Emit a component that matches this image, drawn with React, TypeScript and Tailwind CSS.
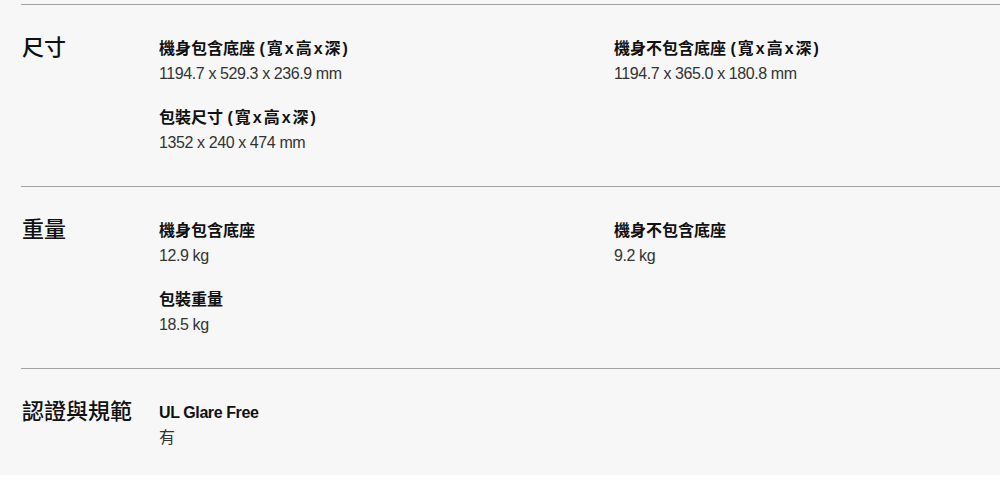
type Spec = {
  label: string
  value: string
}

type Section = {
  title: string
  items: Spec[]
  last?: boolean
}

const sections: Section[] = [
  {
    title: "尺寸",
    items: [
      { label: "機身包含底座 (寬x高x深)", value: "1194.7 x 529.3 x 236.9 mm" },
      { label: "機身不包含底座 (寬x高x深)", value: "1194.7 x 365.0 x 180.8 mm" },
      { label: "包裝尺寸 (寬x高x深)", value: "1352 x 240 x 474 mm" },
    ],
  },
  {
    title: "重量",
    items: [
      { label: "機身包含底座", value: "12.9 kg" },
      { label: "機身不包含底座", value: "9.2 kg" },
      { label: "包裝重量", value: "18.5 kg" },
    ],
  },
  {
    title: "認證與規範",
    items: [{ label: "UL Glare Free", value: "有" }],
    last: true,
  },
]

const SpecItem = ({ spec }: { spec: Spec }) => {
  // the "(寬x高x深)" part sits a little looser in the original font
  const [name, dims] = spec.label.split(" (")
  const latin = /^[\x00-\x7f]+$/.test(name)

  return (
    <div>
      <div
        className={`text-[16px] leading-[24px] font-bold text-[#111] ${latin ? "tracking-[-0.4px]" : "tracking-normal"}`}
      >
        {name}
        {dims && (
          <>
            {" "}
            <span className="tracking-[2px]">({dims}</span>
          </>
        )}
      </div>
      <div className="mt-px text-[16px] leading-[24px] tracking-[-0.4px] text-[#333]">
        {spec.value}
      </div>
    </div>
  )
}

export default function App() {
  return (
    <div
      className="w-full bg-white"
      style={{ fontFamily: '"Liberation Sans", "Noto Sans CJK TC", sans-serif' }}
    >
      <div className="bg-[#f7f7f7] pt-[4px]">
        {sections.map((section) => (
          <div
            key={section.title}
            className={`ml-[21px] flex border-t border-[#a3a3a3] pt-[32px] ${section.last ? "pb-[25px]" : "pb-[31px]"}`}
          >
            <h3 className="w-[138px] shrink-0 pl-px text-[22px] leading-[22px] font-medium text-[#111]">
              {section.title}
            </h3>
            <div className="grid flex-1 grid-cols-[455px_1fr] gap-y-[20px]">
              {section.items.map((spec, i) => (
                <SpecItem key={i} spec={spec} />
              ))}
            </div>
          </div>
        ))}
      </div>
    </div>
  )
}
